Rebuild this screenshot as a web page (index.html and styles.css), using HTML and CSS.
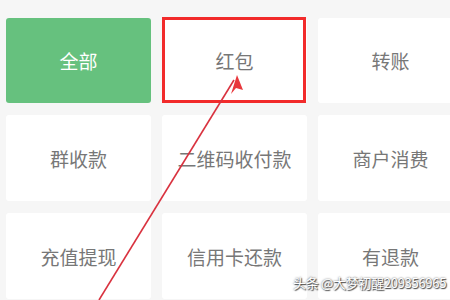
FILE: index.html
```html
<!DOCTYPE html>
<html lang="zh">
<head>
    <meta charset="UTF-8" />
    <title>交易类型</title>
    <link rel="stylesheet" href="styles.css">
</head>
<body>
    <div class="grid">
        <div class="cell active">全部</div>
        <div class="cell">红包</div>
        <div class="cell">转账</div>
        <div class="cell">群收款</div>
        <div class="cell">二维码收付款</div>
        <div class="cell">商户消费</div>
        <div class="cell">充值提现</div>
        <div class="cell">信用卡还款</div>
        <div class="cell">有退款</div>
    </div>

    <!-- 标注 -->
    <div class="mark-box"></div>
    <svg class="arrow" width="450" height="300" viewBox="0 0 450 300">
        <line x1="99" y1="300" x2="234" y2="80" stroke="#d9323f" stroke-width="1.6" />
        <polygon points="237,75 231,94 236,88 243,90" fill="#e8383d" />
    </svg>
    <div class="watermark">头条 @大梦初醒209356965</div>
</body>
</html>
```

FILE: styles.css
```css
body {
    margin: 0;
    background-color: #f6f6f6;
    font-family: "Noto Sans CJK SC", "Noto Sans", sans-serif;
    width: 450px;
    height: 300px;
    overflow: hidden;
    position: relative;
}
.grid {
    display: grid;
    grid-template-columns: repeat(3, 145px);
    grid-template-rows: 85px 86px 86px;
    column-gap: 11px;
    row-gap: 12px;
    padding: 18px 0 0 6px;
}
.cell {
    background-color: #fff;
    border-radius: 3px;
    display: flex;
    align-items: center;
    justify-content: center;
    font-size: 19px;
    color: #777;
}
.cell.active {
    background-color: #66c17e;
    color: #fff;
}
.mark-box {
    position: absolute;
    left: 162px;
    top: 17px;
    width: 138px;
    height: 80px;
    border: 3px solid #f22b2b;
}
.arrow {
    position: absolute;
    left: 0;
    top: 0;
}
.watermark {
    position: absolute;
    left: 293px;
    top: 273px;
    font-size: 13px;
    color: #fff;
    text-shadow: 0 0 2px #555, 1px 1px 1px #444;
    letter-spacing: -0.3px;
}
```
